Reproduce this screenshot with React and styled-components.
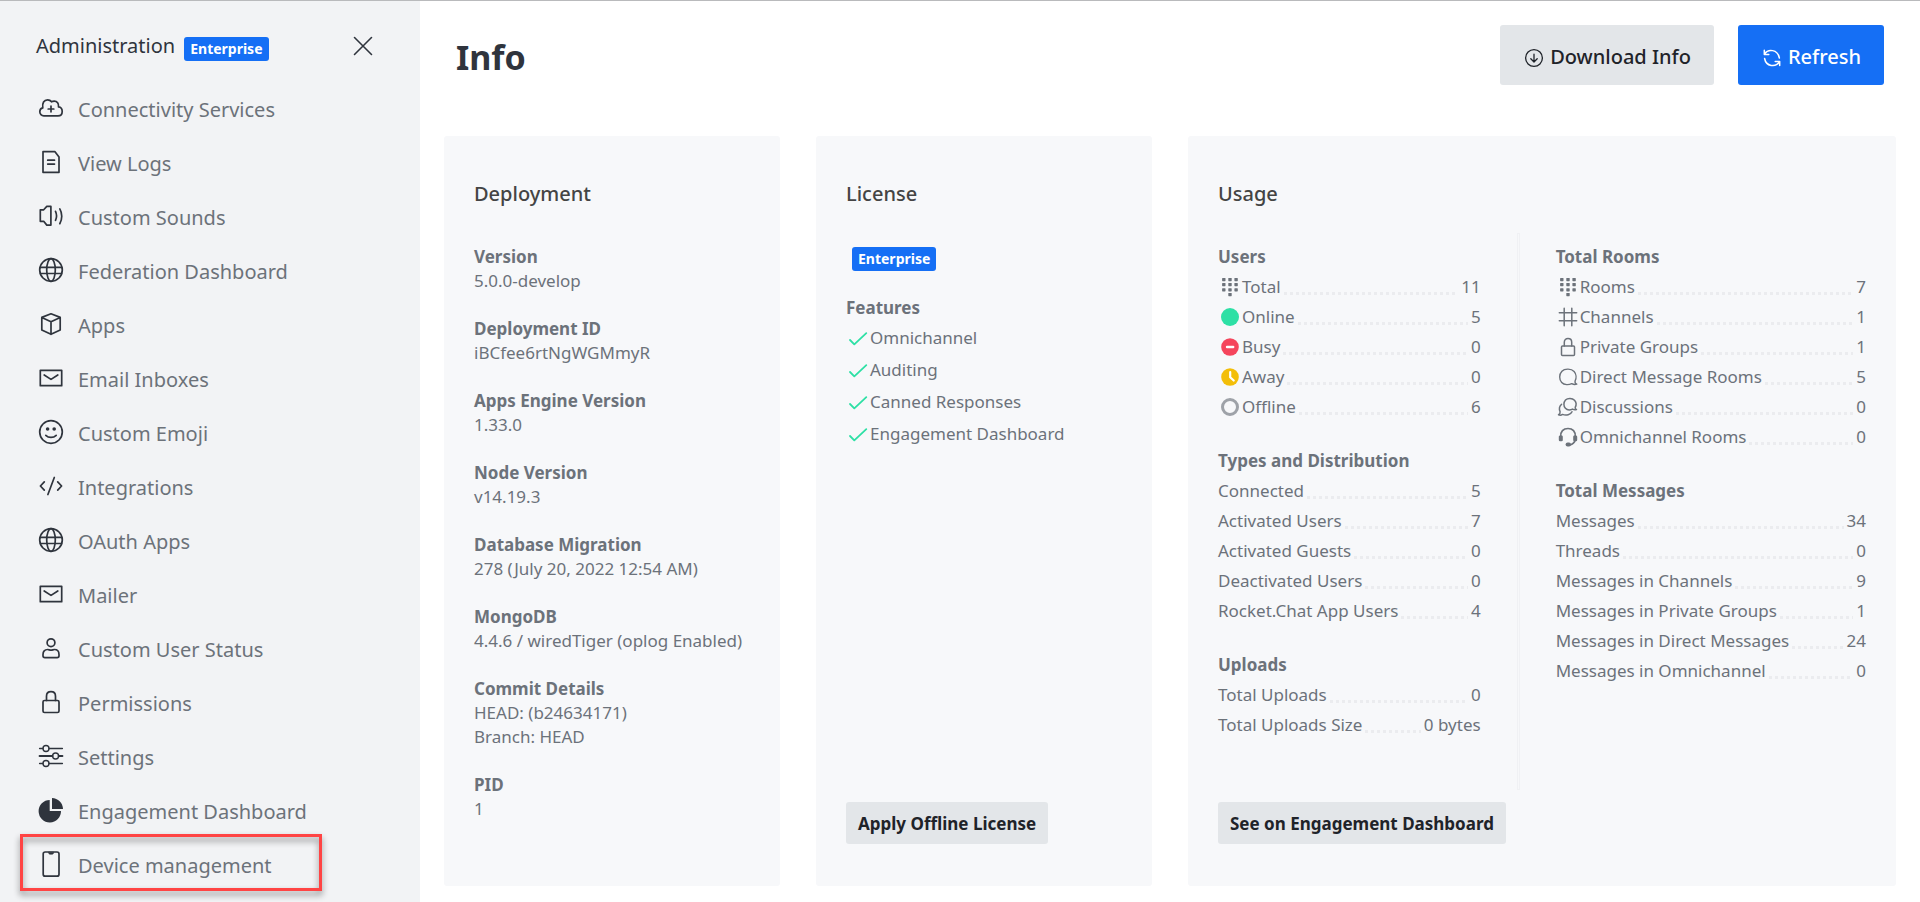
import React from 'react';
import styled, { createGlobalStyle, css } from 'styled-components';

const color = {
  ink: '#2f343d',
  text: '#6c727a',
  blue: '#156ff5',
  sidebar: '#f2f3f5',
  card: '#f7f8fa',
  button: '#e3e6e9',
  dots: '#ebecef',
  green: '#2de0a5',
  red: '#f5455c',
  yellow: '#f3be08',
  grey: '#9ea2a8',
};

const GlobalStyle = createGlobalStyle`
  *, *::before, *::after { box-sizing: border-box; }
  body {
    margin: 0;
    background: #fff;
    color: ${color.text};
    font-family: "Segoe UI", "Noto Sans", "Open Sans", sans-serif;
    font-size: 17px;
    line-height: 24px;
  }
  h1, h2, h3, p, ul, dl, dd { margin: 0; padding: 0; }
  ul { list-style: none; }
  button { font-family: inherit; border: 0; cursor: pointer; }
`;

/* ---------- icons ---------- */

const Svg = styled.svg`
  flex: none;
  display: block;
  width: 24px;
  height: 24px;
  overflow: visible;
  fill: none;
  stroke: currentColor;
  stroke-width: ${(p) => p.$weight || 1.7};
  stroke-linecap: round;
  stroke-linejoin: round;
`;

const Icon = ({ weight, children }) => (
  <Svg viewBox="0 0 24 24" $weight={weight} aria-hidden="true">
    {children}
  </Svg>
);

const solid = { fill: 'currentColor', stroke: 'none' };

const CloudPlus = () => (
  <Icon>
    <path d="M4.8 19.8C2.5 19.8.8 18 .8 15.8c0-2 1.2-3.5 3-3.9C3 7 5 3.8 8.6 3.8c1.7 0 3 .7 3.9 2 .8-.5 1.7-.7 2.7-.7 3 0 4.7 2.7 4.3 5.8 2.3.3 3.7 2.3 3.7 4.5 0 2.600-1.700 4.400-4.200 4.400z" />
    <path d="M12 10.200v5.600M9.200 13h5.600" />
  </Icon>
);
const Doc = () => (
  <Icon>
    <path d="M4 1.700h12l4 5.300v15.300H4z" />
    <path d="M8.700 10.200h6.800M8.700 14.100h6.800" />
  </Icon>
);
const Speaker = () => (
  <Icon>
    <path d="M1.300 5.800h3.400L7.800 2.400h4.100v18.700H7.800L4.700 17.300H1.300z" />
    <path d="M16.500 7.300c1.300 2.800 1.300 6.200 0 9M20.800 4.900c2.600 4.300 2.600 10.400 0 14.800" />
  </Icon>
);
const Globe = () => (
  <Icon>
    <circle cx="12" cy="12" r="11.300" />
    <ellipse cx="12" cy="12" rx="4.300" ry="11.300" />
    <path d="M1.200 9.300h21.600M1.400 15.500h21.200" />
  </Icon>
);
const Cube = () => (
  <Icon>
    <path d="M12 1.800l9.200 3.600v12.700L12 22.300l-9.200-4.200V5.400zM2.800 5.400L12 9.800l9.200-4.400M12 9.800v12.500" />
  </Icon>
);
const Mail = () => (
  <Icon>
    <path d="M1.300 4.300h21.400v15.400H1.300z" />
    <path d="M5.200 9l6.800 4.400L18.800 9" />
  </Icon>
);
const Smile = () => (
  <Icon>
    <circle cx="12" cy="12" r="11.300" />
    <circle cx="8.600" cy="9" r="1.800" style={solid} />
    <circle cx="15.200" cy="9" r="1.800" style={solid} />
    <path d="M6.800 15.300c2.800 2.800 7.600 2.800 10.400 0" />
  </Icon>
);
const Code = () => (
  <Icon>
    <path d="M15.300 3.500L8.900 20.500M5.300 7.800L1.400 12l3.900 4.200M18.700 7.800l3.900 4.200-3.900 4.200" />
  </Icon>
);
const User = () => (
  <Icon>
    <circle cx="12" cy="6.700" r="3.900" />
    <path d="M4 18.500c0-3.200 1.700-5 4.600-5 1.200 0 2 .7 3.400.7s2.200-.7 3.400-.7c2.900 0 4.600 1.800 4.600 5v1.300c0 1.200-.7 1.900-1.900 1.900H5.900c-1.200 0-1.900-.7-1.900-1.900z" />
  </Icon>
);
const Lock = () => (
  <Icon>
    <rect x="4" y="10.500" width="16" height="12" rx="1.500" />
    <path d="M7.500 10.500V6.200C7.500 3.500 9.300 1.700 12 1.700s4.500 1.800 4.500 4.500v4.300" />
  </Icon>
);
const Sliders = () => (
  <Icon weight={1.4}>
    <path d="M.6 4.500h3.300M10 4.500h13.400M.6 19.500h3.300M10 19.500h13.400" />
    <path d="M.6 12h12.900M19.700 12h3.700" strokeWidth="2" />
    <circle cx="7" cy="4.500" r="3" />
    <circle cx="16.600" cy="12" r="3" />
    <circle cx="7" cy="19.500" r="3" />
  </Icon>
);
const Pie = () => (
  <Icon>
    <path style={solid} d="M10.700 2v11H22A11.200 11.200 0 1 1 10.700 2z" />
    <path style={solid} d="M13 0c6 .2 10.700 4.700 11 10.900H13z" />
  </Icon>
);
const Phone = () => (
  <Icon>
    <rect x="4.200" y="0" width="15.800" height="24.200" rx="2" />
    <path d="M9.500.5c.2 1.200.6 1.700 1.500 1.700h2.200c.9 0 1.300-.5 1.500-1.700z" fill="currentColor" strokeWidth="0.600" />
  </Icon>
);
const Cross = () => (
  <Icon weight={1.6}>
    <path d="M3.500 3.500l17 17M20.500 3.500l-17 17" />
  </Icon>
);
const DownloadCircle = () => (
  <Icon weight={1.3}>
    <circle cx="12" cy="12" r="8.400" />
    <path d="M12 8.200v7.600M8.800 12.800l3.200 3.200 3.200-3.200" />
  </Icon>
);
const RefreshArrows = () => (
  <Icon weight={1.5}>
    <path d="M4.700 7.800c3.300-5.200 13-4.700 14.700 4.200M4.300 4.300v4.200h4.500M4.600 12.500c1.500 8.200 11 9 14.600 3.700M19.700 19.600v-4.100h-4.500" />
  </Icon>
);
const Check = () => (
  <Icon weight={1.8}>
    <path d="M4 14l4.300 4.300L20.300 7.200" />
  </Icon>
);
const DialPad = () => (
  <Icon>
    {[3, 8, 13.2].map((y) =>
      [4.1, 10.3, 16.4].map((x) => (
        <rect key={`${x}-${y}`} x={x} y={y} width="3.400" height="3.200" rx="0.600" style={solid} />
      ))
    )}
    <rect x="10.300" y="18" width="3.400" height="3.200" rx="0.600" style={solid} />
  </Icon>
);
const Hash = () => (
  <Icon weight={1.5}>
    <path d="M8.200 3.300v17.400M15.800 3.300v17.400M3.300 7.800h17.400M3.300 15.800h17.400" />
  </Icon>
);
const SmallLock = () => (
  <Icon weight={1.5}>
    <rect x="5.500" y="11" width="13" height="9.500" rx="1" />
    <path d="M8.300 11V7.200c0-2.200 1.500-3.700 3.700-3.700s3.700 1.500 3.700 3.700V11" />
  </Icon>
);
const Balloon = () => (
  <Icon weight={1.4}>
    <path d="M20.800 19.200c-1.400-.5-2-1.700-1.700-3.200 1.500-2.900 1.200-7-1-9.500-2.700-3-9.400-3.300-12.200-.2-2.900 3.100-2.900 8.200-.2 11.200 2.600 2.800 7.300 2.400 10 1.200 1.500.8 3.200 1.100 5.100.5z" />
  </Icon>
);
const Discussion = () => (
  <Icon weight={1.5}>
    <path d="M20.500 14.500c-1-.3-1.500-1-1.300-2.200 1.200-2.200 1-5.300-.7-7.100-2.100-2.200-6.900-2.300-9-.1-2.100 2.300-2.100 6.100-.1 8.200 1.800 1.900 5.200 1.700 7.200.8 1.100.7 2.500.9 3.900.4z" />
    <path d="M5.600 9.200c-2.300 2-2.500 5.200-1.500 7.500.2 1.500-.3 2.500-1.600 3.100 1.400.6 2.900.4 4-.4 3.700 1.600 8.300.2 9.500-2.700" />
  </Icon>
);
const Headset = () => (
  <Icon weight={1.7}>
    <path d="M4.800 11.500C4.300 6.500 7.300 3.500 12 3.500s7.700 3 7.200 8M19.300 15c-.8 2.600-2.500 4.200-5.300 4.800" />
    <rect x="2.800" y="10.500" width="4" height="5.800" rx="1.300" style={solid} />
    <rect x="17.200" y="10.500" width="4" height="5.800" rx="1.300" style={solid} />
    <rect x="9.600" y="17.500" width="5.400" height="4" rx="2" style={solid} />
  </Icon>
);
const Online = () => (
  <Icon>
    <circle cx="12" cy="12" r="9" fill={color.green} stroke="none" />
  </Icon>
);
const Busy = () => (
  <Icon>
    <circle cx="12" cy="12" r="8.800" fill={color.red} stroke="none" />
    <path d="M9 12h6.200" stroke="#fff" strokeWidth="2.400" />
  </Icon>
);
const Away = () => (
  <Icon>
    <circle cx="12" cy="12" r="8.800" fill={color.yellow} stroke="none" />
    <path d="M12.200 7v5.300l3.500 3.200" stroke="#fff" strokeWidth="2.200" />
  </Icon>
);
const Offline = () => (
  <Icon>
    <circle cx="12" cy="12" r="7.500" stroke={color.grey} strokeWidth="3" />
  </Icon>
);

/* ---------- page frame ---------- */

const Page = styled.div`
  display: grid;
  grid-template-columns: 420px minmax(0, 1fr);
  min-height: 100vh;
  border-top: 1px solid #b9babc;
`;

const Sidebar = styled.aside`
  background: ${color.sidebar};
`;

const SidebarHeader = styled.header`
  display: flex;
  align-items: center;
  padding: 30px 45px 22px 36px;
`;

const SidebarTitle = styled.h2`
  flex: 1;
  display: flex;
  align-items: flex-end;
  gap: 9px;
  color: ${color.ink};
  font-size: 20px;
  font-weight: 400;
  line-height: 30px;
`;

const CloseButton = styled.button`
  padding: 0;
  background: none;
  color: ${color.ink};
`;

const Badge = styled.span`
  display: inline-block;
  height: 24px;
  padding: 0 6px;
  border-radius: 3px;
  background: ${color.blue};
  color: #fff;
  font-size: 14px;
  font-weight: 700;
  line-height: 24px;
`;

const NavItem = styled.li`
  position: relative;
`;

const NavLink = styled.a`
  display: flex;
  align-items: center;
  gap: 15px;
  height: 54px;
  padding: 0 39px;
  color: ${color.text};
  font-size: 20px;
  text-decoration: none;

  svg {
    margin-bottom: 4px;
    color: ${color.ink};
  }
`;

const Highlight = styled.span`
  position: absolute;
  inset: -5px 98px 2px 20px;
  border: 3px solid #ff4444;
  filter: drop-shadow(0 4px 3px rgba(0, 0, 0, 0.45));
  pointer-events: none;
`;

const Main = styled.main`
  padding: 24px 24px 16px;
`;

const PageHeader = styled.header`
  display: flex;
  align-items: center;
  gap: 24px;
  padding: 0 12px;
  margin-bottom: 51px;
`;

const PageTitle = styled.h1`
  flex: 1;
  padding-top: 4px;
  color: ${color.ink};
  font-size: 34px;
  font-weight: 700;
  line-height: 56px;
`;

const ActionButton = styled.button`
  display: flex;
  align-items: center;
  gap: 4px;
  height: 60px;
  padding: 3px 23px 0 22px;
  border-radius: 3px;
  font-size: 20px;
  font-weight: 500;
  line-height: 30px;
  background: ${(p) => (p.$primary ? color.blue : color.button)};
  color: ${(p) => (p.$primary ? '#fff' : '#1f2329')};

  svg { margin-top: 3px; }
`;

/* ---------- cards ---------- */

const Cards = styled.div`
  display: grid;
  grid-template-columns: repeat(4, minmax(0, 1fr));
  gap: 36px;
`;

const Card = styled.section`
  display: flex;
  flex-direction: column;
  align-items: flex-start;
  padding: 43px 30px 42px;
  border-radius: 3px;
  background: ${color.card};
  ${(p) => p.$wide && css`grid-column: span 2;`}
`;

const CardTitle = styled.h2`
  margin-bottom: 24px;
  color: #444;
  font-size: 20px;
  font-weight: 500;
  line-height: 30px;
`;

const CardBody = styled.div`
  flex: 1;
  width: 100%;
`;

const Columns = styled(CardBody)`
  display: grid;
  grid-template-columns: 11fr 3px 13fr;
  gap: 36px;
`;

const Divider = styled.div`
  border: 1px solid #f0f1f4;
`;

const Column = styled.div`
  display: flex;
  flex-direction: column;
  gap: ${(p) => p.$gap || 24}px;
  padding: 12px 0 ${(p) => (p.$gap ? 12 : 23)}px;
`;

const GroupTitle = styled.h3`
  font-size: 17px;
  font-weight: 700;
  line-height: 24px;
`;

const BadgeRow = styled.div`
  display: flex;
  padding: 2px 6px 1px;
`;

const Feature = styled.li`
  display: flex;
  align-items: center;
  height: 32px;

  svg { color: ${color.green}; }
`;

const FeatureList = styled.ul`
  padding-top: 2px;
`;

const Stat = styled.div`
  display: flex;
  align-items: center;
  height: 24px;
  margin-top: 6px;
  white-space: nowrap;
`;

const StatName = styled.dt`
  display: flex;
  align-items: center;
`;

const Leader = styled.span`
  flex: 1;
  align-self: flex-end;
  height: 3px;
  margin: 0 3px 4px;
  background: repeating-linear-gradient(90deg, ${color.dots} 0 3px, transparent 3px 6px);
`;

const CardButton = styled.button`
  height: 42px;
  margin-top: 12px;
  padding: 2px 12px 0;
  border-radius: 3px;
  background: ${color.button};
  color: #1f2329;
  font-size: 17px;
  font-weight: 700;
  line-height: 24px;
`;

/* ---------- data ---------- */

const NAV = [
  [CloudPlus, 'Connectivity Services'],
  [Doc, 'View Logs'],
  [Speaker, 'Custom Sounds'],
  [Globe, 'Federation Dashboard'],
  [Cube, 'Apps'],
  [Mail, 'Email Inboxes'],
  [Smile, 'Custom Emoji'],
  [Code, 'Integrations'],
  [Globe, 'OAuth Apps'],
  [Mail, 'Mailer'],
  [User, 'Custom User Status'],
  [Lock, 'Permissions'],
  [Sliders, 'Settings'],
  [Pie, 'Engagement Dashboard'],
  [Phone, 'Device management', true],
];

const DEPLOYMENT = [
  ['Version', '5.0.0-develop'],
  ['Deployment ID', 'iBCfee6rtNgWGMmyR'],
  ['Apps Engine Version', '1.33.0'],
  ['Node Version', 'v14.19.3'],
  ['Database Migration', '278 (July 20, 2022 12:54 AM)'],
  ['MongoDB', '4.4.6 / wiredTiger (oplog Enabled)'],
  ['Commit Details', 'HEAD: (b24634171)', 'Branch: HEAD'],
  ['PID', '1'],
];

const FEATURES = ['Omnichannel', 'Auditing', 'Canned Responses', 'Engagement Dashboard'];

const USAGE_LEFT = [
  ['Users', [
    ['Total', '11', DialPad],
    ['Online', '5', Online],
    ['Busy', '0', Busy],
    ['Away', '0', Away],
    ['Offline', '6', Offline],
  ]],
  ['Types and Distribution', [
    ['Connected', '5'],
    ['Activated Users', '7'],
    ['Activated Guests', '0'],
    ['Deactivated Users', '0'],
    ['Rocket.Chat App Users', '4'],
  ]],
  ['Uploads', [
    ['Total Uploads', '0'],
    ['Total Uploads Size', '0 bytes'],
  ]],
];

const USAGE_RIGHT = [
  ['Total Rooms', [
    ['Rooms', '7', DialPad],
    ['Channels', '1', Hash],
    ['Private Groups', '1', SmallLock],
    ['Direct Message Rooms', '5', Balloon],
    ['Discussions', '0', Discussion],
    ['Omnichannel Rooms', '0', Headset],
  ]],
  ['Total Messages', [
    ['Messages', '34'],
    ['Threads', '0'],
    ['Messages in Channels', '9'],
    ['Messages in Private Groups', '1'],
    ['Messages in Direct Messages', '24'],
    ['Messages in Omnichannel', '0'],
  ]],
];

const StatColumn = ({ groups }) => (
  <Column $gap={30}>
    {groups.map(([title, rows]) => (
      <section key={title}>
        <GroupTitle>{title}</GroupTitle>
        <dl>
          {rows.map(([name, value, Glyph]) => (
            <Stat key={name}>
              <StatName>
                {Glyph && <Glyph />}
                {name}
              </StatName>
              <Leader />
              <dd>{value}</dd>
            </Stat>
          ))}
        </dl>
      </section>
    ))}
  </Column>
);

export default function App() {
  return (
    <>
      <GlobalStyle />
      <Page>
        <Sidebar>
          <SidebarHeader>
            <SidebarTitle>
              Administration <Badge>Enterprise</Badge>
            </SidebarTitle>
            <CloseButton type="button" aria-label="Close">
              <Cross />
            </CloseButton>
          </SidebarHeader>
          <nav>
            <ul>
              {NAV.map(([Glyph, label, marked]) => (
                <NavItem key={label}>
                  <NavLink href="#">
                    <Glyph />
                    {label}
                  </NavLink>
                  {marked && <Highlight />}
                </NavItem>
              ))}
            </ul>
          </nav>
        </Sidebar>
        <Main>
          <PageHeader>
            <PageTitle>Info</PageTitle>
            <ActionButton type="button">
              <DownloadCircle />
              Download Info
            </ActionButton>
            <ActionButton type="button" $primary>
              <RefreshArrows />
              Refresh
            </ActionButton>
          </PageHeader>
          <Cards>
            <Card>
              <CardTitle>Deployment</CardTitle>
              <Column>
                {DEPLOYMENT.map(([title, ...lines]) => (
                  <section key={title}>
                    <GroupTitle>{title}</GroupTitle>
                    {lines.map((line) => (
                      <p key={line}>{line}</p>
                    ))}
                  </section>
                ))}
              </Column>
            </Card>
            <Card>
              <CardTitle>License</CardTitle>
              <CardBody>
                <Column>
                  <BadgeRow>
                    <Badge>Enterprise</Badge>
                  </BadgeRow>
                  <section>
                    <GroupTitle>Features</GroupTitle>
                    <FeatureList>
                      {FEATURES.map((name) => (
                        <Feature key={name}>
                          <Check />
                          {name}
                        </Feature>
                      ))}
                    </FeatureList>
                  </section>
                </Column>
              </CardBody>
              <CardButton type="button">Apply Offline License</CardButton>
            </Card>
            <Card $wide>
              <CardTitle>Usage</CardTitle>
              <Columns>
                <StatColumn groups={USAGE_LEFT} />
                <Divider />
                <StatColumn groups={USAGE_RIGHT} />
              </Columns>
              <CardButton type="button">See on Engagement Dashboard</CardButton>
            </Card>
          </Cards>
        </Main>
      </Page>
    </>
  );
}
